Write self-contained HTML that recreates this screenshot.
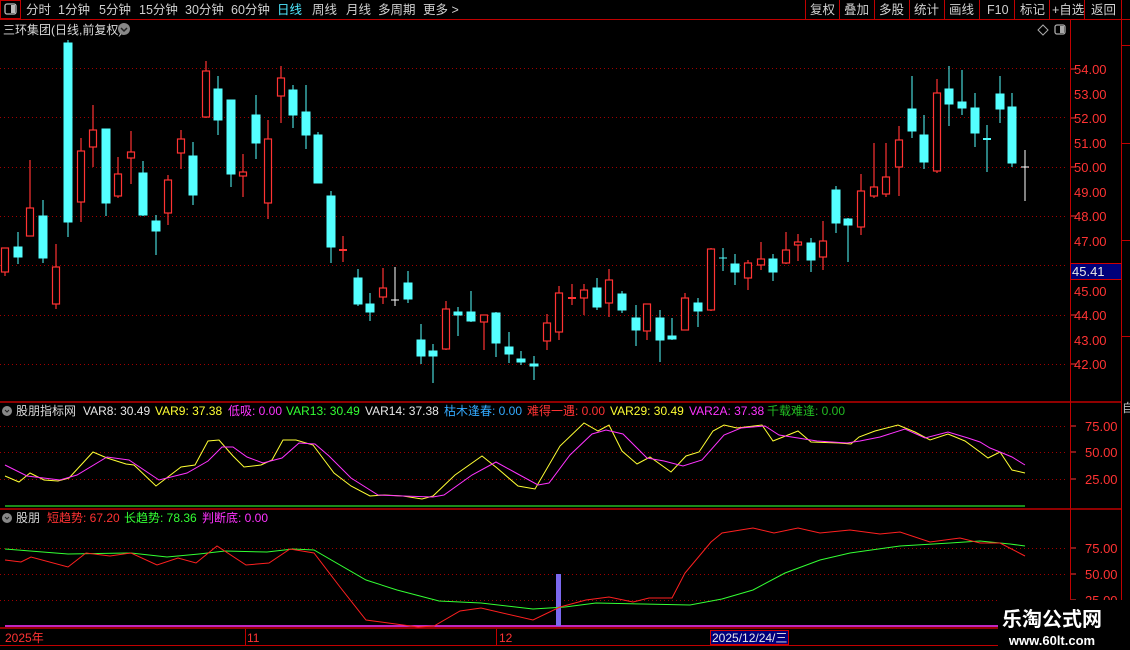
<!DOCTYPE html>
<html><head><meta charset="utf-8"><style>
body{margin:0;background:#000;width:1130px;height:650px;overflow:hidden;font-family:"Liberation Sans","Noto Sans CJK SC",sans-serif;}
svg{position:absolute;left:0;top:0}
text{font-family:"Liberation Sans","Noto Sans CJK SC",sans-serif;}
</style></head><body>
<svg width="1130" height="650" viewBox="0 0 1130 650">
<g font-size="12.5" fill="#d0d0d0">
<rect x="0.5" y="0.5" width="20" height="18" fill="none" stroke="#c00000"/>
<rect x="5" y="4" width="11" height="10" rx="2" fill="none" stroke="#bbb" stroke-width="1.3"/><rect x="11" y="5" width="4" height="8" fill="#bbb"/>
<text x="26" y="14">分时</text><text x="58" y="14">1分钟</text><text x="99" y="14">5分钟</text><text x="139" y="14">15分钟</text><text x="185" y="14">30分钟</text><text x="231" y="14">60分钟</text>
<text x="277" y="14" fill="#4fe8ff">日线</text><text x="312" y="14">周线</text><text x="346" y="14">月线</text><text x="378" y="14">多周期</text><text x="423" y="14">更多 &gt;</text>
<text x="810" y="14">复权</text><text x="844" y="14">叠加</text><text x="879" y="14">多股</text><text x="914" y="14">统计</text><text x="949" y="14">画线</text><text x="987" y="14">F10</text><text x="1020" y="14">标记</text><text x="1052" y="14">+自选</text><text x="1091" y="14">返回</text>
</g>
<g stroke="#c00000" stroke-width="1">
<line x1="0" y1="19.5" x2="1130" y2="19.5"/>
<line x1="805.5" y1="0" x2="805.5" y2="19"/><line x1="839.5" y1="0" x2="839.5" y2="19"/><line x1="874.5" y1="0" x2="874.5" y2="19"/><line x1="909.5" y1="0" x2="909.5" y2="19"/><line x1="944.5" y1="0" x2="944.5" y2="19"/><line x1="979.5" y1="0" x2="979.5" y2="19"/><line x1="1014.5" y1="0" x2="1014.5" y2="19"/><line x1="1049.5" y1="0" x2="1049.5" y2="19"/><line x1="1084.5" y1="0" x2="1084.5" y2="19"/><line x1="1121.5" y1="0" x2="1121.5" y2="19"/>
<line x1="1070.5" y1="19" x2="1070.5" y2="628"/>
<line x1="1121.5" y1="19" x2="1121.5" y2="620"/>
<line x1="1121" y1="45.5" x2="1130" y2="45.5"/><line x1="1121" y1="143.5" x2="1130" y2="143.5"/><line x1="1121" y1="240.5" x2="1130" y2="240.5"/><line x1="1121" y1="336.5" x2="1130" y2="336.5"/>
</g>
<text x="3" y="34" font-size="12" fill="#d8d8d8">三环集团(日线,前复权)</text>
<circle cx="124" cy="29" r="6" fill="#888"/><path d="M121 28 l3 3 l3 -3" stroke="#222" stroke-width="1.5" fill="none"/>
<path d="M1043 25 l5 5 l-5 5 l-5 -5z" fill="none" stroke="#aaa"/>
<rect x="1055" y="25" width="10" height="9" rx="2" fill="none" stroke="#aaa" stroke-width="1.3"/><rect x="1060" y="26" width="4" height="7" fill="#aaa"/>
<g stroke="#a00000" stroke-dasharray="1,3" stroke-width="1">
<line x1="0" y1="68.5" x2="1068" y2="68.5"/><line x1="0" y1="117.5" x2="1068" y2="117.5"/><line x1="0" y1="167.5" x2="1068" y2="167.5"/><line x1="0" y1="216.5" x2="1068" y2="216.5"/><line x1="0" y1="265.5" x2="1068" y2="265.5"/><line x1="0" y1="315.5" x2="1068" y2="315.5"/><line x1="0" y1="364.5" x2="1068" y2="364.5"/>
<line x1="0" y1="426.5" x2="1068" y2="426.5"/><line x1="0" y1="452.5" x2="1068" y2="452.5"/><line x1="0" y1="479.5" x2="1068" y2="479.5"/>
<line x1="0" y1="548.5" x2="1068" y2="548.5"/><line x1="0" y1="574.5" x2="1068" y2="574.5"/><line x1="0" y1="600.5" x2="1068" y2="600.5"/>
</g>
<g font-size="13" fill="#ff3333">
<text x="1074" y="74">54.00</text><text x="1074" y="99">53.00</text><text x="1074" y="123">52.00</text><text x="1074" y="148">51.00</text><text x="1074" y="172">50.00</text><text x="1074" y="197">49.00</text><text x="1074" y="221">48.00</text><text x="1074" y="246">47.00</text><text x="1074" y="296">45.00</text><text x="1074" y="320">44.00</text><text x="1074" y="345">43.00</text><text x="1074" y="369">42.00</text>
<text x="1085" y="431">75.00</text><text x="1085" y="457">50.00</text><text x="1085" y="484">25.00</text>
<text x="1085" y="553">75.00</text><text x="1085" y="579">50.00</text><text x="1085" y="605">25.00</text>
</g>
<g stroke="#ff3333"><line x1="1071" y1="69" x2="1076" y2="69"/><line x1="1071" y1="118" x2="1076" y2="118"/><line x1="1071" y1="167" x2="1076" y2="167"/><line x1="1071" y1="216" x2="1076" y2="216"/><line x1="1071" y1="315" x2="1076" y2="315"/><line x1="1071" y1="364" x2="1076" y2="364"/>
<line x1="1071" y1="426" x2="1076" y2="426"/><line x1="1071" y1="452" x2="1076" y2="452"/><line x1="1071" y1="479" x2="1076" y2="479"/><line x1="1071" y1="548" x2="1076" y2="548"/><line x1="1071" y1="574" x2="1076" y2="574"/><line x1="1071" y1="600" x2="1076" y2="600"/></g>
<rect x="1070.5" y="263.5" width="51" height="16" fill="#00007a" stroke="#d00000"/>
<text x="1072" y="276" font-size="13" fill="#e8e8e8">45.41</text>
<g fill="#bbb" font-size="12"><text x="1122" y="412">自</text></g>
<g fill="#54ffff" stroke="#54ffff">
<line x1="18" y1="232" x2="18" y2="264"/><rect x="14" y="247" width="8" height="10"/>
<line x1="43" y1="200" x2="43" y2="263"/><rect x="39" y="216" width="8" height="42"/>
<line x1="68" y1="40" x2="68" y2="237"/><rect x="64" y="43" width="8" height="179"/>
<line x1="106" y1="129" x2="106" y2="216"/><rect x="102" y="129" width="8" height="74"/>
<line x1="143" y1="161" x2="143" y2="216"/><rect x="139" y="173" width="8" height="42"/>
<line x1="156" y1="215" x2="156" y2="255"/><rect x="152" y="221" width="8" height="10"/>
<line x1="193" y1="142" x2="193" y2="205"/><rect x="189" y="156" width="8" height="39"/>
<line x1="218" y1="76" x2="218" y2="135"/><rect x="214" y="89" width="8" height="31"/>
<line x1="231" y1="100" x2="231" y2="187"/><rect x="227" y="100" width="8" height="74"/>
<line x1="256" y1="95" x2="256" y2="159"/><rect x="252" y="115" width="8" height="28"/>
<line x1="293" y1="85" x2="293" y2="128"/><rect x="289" y="90" width="8" height="25"/>
<line x1="306" y1="85" x2="306" y2="149"/><rect x="302" y="112" width="8" height="23"/>
<line x1="318" y1="132" x2="318" y2="183"/><rect x="314" y="135" width="8" height="48"/>
<line x1="331" y1="191" x2="331" y2="263"/><rect x="327" y="196" width="8" height="51"/>
<line x1="358" y1="269" x2="358" y2="306"/><rect x="354" y="278" width="8" height="26"/>
<line x1="370" y1="293" x2="370" y2="321"/><rect x="366" y="304" width="8" height="8"/>
<line x1="408" y1="271" x2="408" y2="303"/><rect x="404" y="283" width="8" height="16"/>
<line x1="421" y1="324" x2="421" y2="364"/><rect x="417" y="340" width="8" height="16"/>
<line x1="433" y1="344" x2="433" y2="383"/><rect x="429" y="351" width="8" height="5"/>
<line x1="458" y1="307" x2="458" y2="336"/><rect x="454" y="312" width="8" height="3"/>
<line x1="471" y1="291" x2="471" y2="322"/><rect x="467" y="312" width="8" height="9"/>
<line x1="496" y1="312" x2="496" y2="357"/><rect x="492" y="313" width="8" height="30"/>
<line x1="509" y1="332" x2="509" y2="363"/><rect x="505" y="347" width="8" height="7"/>
<line x1="521" y1="351" x2="521" y2="365"/><rect x="517" y="359" width="8" height="3"/>
<line x1="534" y1="356" x2="534" y2="380"/><rect x="530" y="364" width="8" height="2"/>
<line x1="597" y1="278" x2="597" y2="310"/><rect x="593" y="288" width="8" height="19"/>
<line x1="622" y1="291" x2="622" y2="313"/><rect x="618" y="294" width="8" height="16"/>
<line x1="636" y1="305" x2="636" y2="346"/><rect x="632" y="318" width="8" height="12"/>
<line x1="660" y1="310" x2="660" y2="362"/><rect x="656" y="318" width="8" height="22"/>
<line x1="672" y1="318" x2="672" y2="340"/><rect x="668" y="336" width="8" height="3"/>
<line x1="698" y1="298" x2="698" y2="327"/><rect x="694" y="303" width="8" height="8"/>
<line x1="723" y1="248" x2="723" y2="271"/><line x1="719" y1="258" x2="727" y2="258"/>
<line x1="735" y1="254" x2="735" y2="285"/><rect x="731" y="264" width="8" height="8"/>
<line x1="773" y1="254" x2="773" y2="281"/><rect x="769" y="259" width="8" height="13"/>
<line x1="811" y1="238" x2="811" y2="272"/><rect x="807" y="243" width="8" height="17"/>
<line x1="836" y1="186" x2="836" y2="233"/><rect x="832" y="190" width="8" height="33"/>
<line x1="848" y1="218" x2="848" y2="262"/><rect x="844" y="219" width="8" height="6"/>
<line x1="912" y1="76" x2="912" y2="138"/><rect x="908" y="109" width="8" height="22"/>
<line x1="924" y1="115" x2="924" y2="169"/><rect x="920" y="135" width="8" height="27"/>
<line x1="949" y1="66" x2="949" y2="126"/><rect x="945" y="89" width="8" height="15"/>
<line x1="962" y1="70" x2="962" y2="115"/><rect x="958" y="102" width="8" height="6"/>
<line x1="975" y1="93" x2="975" y2="147"/><rect x="971" y="108" width="8" height="25"/>
<line x1="987" y1="125" x2="987" y2="172"/><line x1="983" y1="139" x2="991" y2="139" stroke-width="2"/>
<line x1="1000" y1="76" x2="1000" y2="123"/><rect x="996" y="94" width="8" height="15"/>
<line x1="1012" y1="93" x2="1012" y2="167"/><rect x="1008" y="107" width="8" height="56"/>
</g>
<g fill="#000" stroke="#ff3333" stroke-width="1.2">
<line x1="5" y1="248" x2="5" y2="276"/><rect x="1.5" y="248" width="7" height="24"/>
<line x1="30" y1="160" x2="30" y2="236"/><rect x="26.5" y="208" width="7" height="28"/>
<line x1="56" y1="244" x2="56" y2="309"/><rect x="52.5" y="267" width="7" height="37"/>
<line x1="81" y1="138" x2="81" y2="222"/><rect x="77.5" y="151" width="7" height="51"/>
<line x1="93" y1="105" x2="93" y2="167"/><rect x="89.5" y="130" width="7" height="17"/>
<line x1="118" y1="157" x2="118" y2="198"/><rect x="114.5" y="174" width="7" height="22"/>
<line x1="131" y1="131" x2="131" y2="184"/><rect x="127.5" y="152" width="7" height="6"/>
<line x1="168" y1="175" x2="168" y2="225"/><rect x="164.5" y="180" width="7" height="33"/>
<line x1="181" y1="130" x2="181" y2="169"/><rect x="177.5" y="139" width="7" height="14"/>
<line x1="206" y1="61" x2="206" y2="118"/><rect x="202.5" y="71" width="7" height="46"/>
<line x1="243" y1="154" x2="243" y2="197"/><rect x="239.5" y="172" width="7" height="4"/>
<line x1="268" y1="120" x2="268" y2="219"/><rect x="264.5" y="139" width="7" height="64"/>
<line x1="281" y1="66" x2="281" y2="123"/><rect x="277.5" y="78" width="7" height="18"/>
<line x1="343" y1="236" x2="343" y2="262"/><line x1="339" y1="250" x2="347" y2="250" stroke-width="2"/>
<line x1="383" y1="268" x2="383" y2="304"/><rect x="379.5" y="288" width="7" height="9"/>
<line x1="446" y1="301" x2="446" y2="350"/><rect x="442.5" y="309" width="7" height="40"/>
<line x1="484" y1="315" x2="484" y2="350"/><rect x="480.5" y="315" width="7" height="7"/>
<line x1="547" y1="314" x2="547" y2="350"/><rect x="543.5" y="323" width="7" height="18"/>
<line x1="559" y1="286" x2="559" y2="340"/><rect x="555.5" y="293" width="7" height="39"/>
<line x1="572" y1="284" x2="572" y2="305"/><line x1="568" y1="298" x2="576" y2="298" stroke-width="2"/>
<line x1="584" y1="284" x2="584" y2="315"/><rect x="580.5" y="290" width="7" height="8"/>
<line x1="609" y1="269" x2="609" y2="317"/><rect x="605.5" y="280" width="7" height="23"/>
<line x1="647" y1="305" x2="647" y2="340"/><rect x="643.5" y="304" width="7" height="27"/>
<line x1="685" y1="293" x2="685" y2="330"/><rect x="681.5" y="298" width="7" height="32"/>
<line x1="711" y1="248" x2="711" y2="311"/><rect x="707.5" y="249" width="7" height="61"/>
<line x1="748" y1="260" x2="748" y2="290"/><rect x="744.5" y="263" width="7" height="15"/>
<line x1="761" y1="242" x2="761" y2="270"/><rect x="757.5" y="259" width="7" height="6"/>
<line x1="786" y1="232" x2="786" y2="264"/><rect x="782.5" y="250" width="7" height="13"/>
<line x1="798" y1="234" x2="798" y2="261"/><rect x="794.5" y="242" width="7" height="3"/>
<line x1="823" y1="221" x2="823" y2="270"/><rect x="819.5" y="241" width="7" height="16"/>
<line x1="861" y1="174" x2="861" y2="235"/><rect x="857.5" y="191" width="7" height="36"/>
<line x1="874" y1="143" x2="874" y2="198"/><rect x="870.5" y="187" width="7" height="9"/>
<line x1="886" y1="143" x2="886" y2="197"/><rect x="882.5" y="177" width="7" height="17"/>
<line x1="899" y1="126" x2="899" y2="196"/><rect x="895.5" y="140" width="7" height="27"/>
<line x1="937" y1="79" x2="937" y2="173"/><rect x="933.5" y="93" width="7" height="78"/>
</g>
<g stroke="#fff"><line x1="395" y1="267" x2="395" y2="306"/><line x1="391" y1="300" x2="399" y2="300"/><line x1="1025" y1="150" x2="1025" y2="201"/><line x1="1021" y1="167" x2="1029" y2="167"/></g>
<g stroke="#c00000" stroke-width="1.5"><line x1="0" y1="402" x2="1121" y2="402"/><line x1="0" y1="509" x2="1121" y2="509"/><line x1="0" y1="628" x2="1121" y2="628"/></g>
<circle cx="7" cy="411" r="5" fill="#888"/><path d="M5 410 l2 2 l2 -2" stroke="#222" fill="none"/>
<g font-size="12">
<text x="16" y="415" fill="#d8d8d8">股朋指标网</text>
<text x="83" y="415" fill="#e8e8e8">VAR8: 30.49</text>
<text x="155" y="415" fill="#ffff33">VAR9: 37.38</text>
<text x="228" y="415" fill="#ff33ff">低吸: 0.00</text>
<text x="286" y="415" fill="#33ff33">VAR13: 30.49</text>
<text x="365" y="415" fill="#e8e8e8">VAR14: 37.38</text>
<text x="444" y="415" fill="#33aaff">枯木逢春: 0.00</text>
<text x="527" y="415" fill="#ff3333">难得一遇: 0.00</text>
<text x="610" y="415" fill="#ffff33">VAR29: 30.49</text>
<text x="689" y="415" fill="#ff33ff">VAR2A: 37.38</text>
<text x="767" y="415" fill="#22bb22">千载难逢: 0.00</text>
</g>
<polyline fill="none" stroke="#ffff33" points="5,476 19,482 30,473 44,480 58,481 69,478 93,452 107,458 126,464 134,465 156,486 181,467 195,465 208,441 219,440 233,456 244,467 261,465 272,460 283,440 296,440 313,445 334,473 351,486 370,496 384,495 403,496 422,499 433,496 455,475 482,456 497,468 518,486 535,489 560,446 584,423 598,431 609,425 622,451 637,464 650,457 671,472 686,456 699,452 713,431 724,425 737,428 762,425 773,441 798,431 811,442 839,443 851,444 859,437 875,431 898,425 915,432 930,440 948,434 965,441 980,452 988,458 1000,452 1012,470 1025,473"/>
<polyline fill="none" stroke="#ff33ff" points="5,465 27,476 60,480 77,475 107,457 129,460 159,480 187,473 208,461 222,447 233,447 247,457 263,463 282,458 299,443 315,444 329,456 351,478 378,495 403,496 433,497 444,495 472,475 496,462 516,473 538,485 549,483 570,455 592,434 606,430 623,434 647,458 664,461 683,466 702,460 724,435 741,428 765,426 779,435 817,441 847,443 860,441 880,437 905,429 925,438 948,432 968,438 980,442 990,448 1000,452 1012,457 1025,465"/>
<line x1="5" y1="506" x2="1025" y2="506" stroke="#22bb22" stroke-width="1.5"/>
<circle cx="7" cy="518" r="5" fill="#888"/><path d="M5 517 l2 2 l2 -2" stroke="#222" fill="none"/>
<g font-size="12">
<text x="16" y="522" fill="#d8d8d8">股朋</text>
<text x="47" y="522" fill="#ff3333">短趋势: 67.20</text>
<text x="124" y="522" fill="#33ff33">长趋势: 78.36</text>
<text x="202" y="522" fill="#ff33ff">判断底: 0.00</text>
</g>
<line x1="5" y1="626" x2="1025" y2="626" stroke="#ff33ff" stroke-width="1.5"/>
<rect x="556" y="574" width="5" height="52" fill="#7b68ee"/>
<polyline fill="none" stroke="#33ff33" points="5,549 68,554 131,553 167,557 199,554 225,551 267,552 293,549 314,550 366,580 397,590 439,601 481,603 533,609 565,607 596,603 643,604 690,605 722,599 753,590 785,573 820,560 850,553 900,546 950,543 980,541 1010,544 1025,546"/>
<polyline fill="none" stroke="#ff2020" points="5,560 21,562 31,557 68,567 86,553 110,556 131,553 157,565 178,558 196,563 217,546 246,565 269,563 290,549 314,553 340,587 366,620 418,627 434,626 460,611 481,608 533,620 560,607 586,600 609,597 633,602 649,598 672,598 685,573 711,542 722,533 753,528 774,533 798,528 820,533 850,530 880,534 900,532 930,542 960,538 980,543 1000,543 1025,556"/>
<g stroke="#c00000"><line x1="245.5" y1="629" x2="245.5" y2="645"/><line x1="496.5" y1="629" x2="496.5" y2="645"/></g>
<line x1="0" y1="645.5" x2="1000" y2="645.5" stroke="#c00000"/>
<g font-size="12" fill="#ff3333"><text x="5" y="642">2025年</text><text x="247" y="642">11</text><text x="499" y="642">12</text></g>
<rect x="710.5" y="630.5" width="78" height="14" fill="#00007a" stroke="#d00000"/>
<text x="712" y="642" font-size="12" fill="#e8e8e8">2025/12/24/三</text>
<rect x="998" y="600" width="132" height="50" fill="#000"/>
<text x="1052" y="626" font-size="20" font-weight="bold" fill="#fff" text-anchor="middle" font-family="Noto Sans CJK SC,sans-serif">乐淘公式网</text>
<text x="1052" y="645" font-size="13" font-weight="bold" fill="#fff" text-anchor="middle" font-family="Liberation Serif,serif">www.60lt.com</text>
</svg>
</body></html>
